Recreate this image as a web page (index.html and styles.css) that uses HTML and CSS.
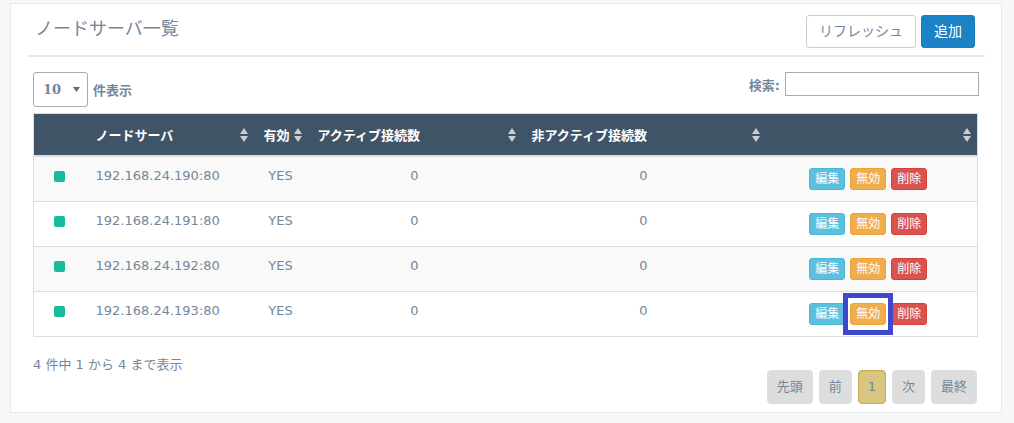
FILE: index.html
```html
<!DOCTYPE html>
<html lang="ja">
<head>
<meta charset="utf-8">
<title>ノードサーバ一覧</title>
<link rel="stylesheet" href="styles.css">
</head>
<body>
<div class="panel">
  <div class="x-title">
    <h2>ノードサーバ一覧</h2>
    <div class="actions">
      <button class="btn btn-default">リフレッシュ</button>
      <button class="btn btn-primary">追加</button>
    </div>
  </div>
  <div class="x-content">
    <div class="controls">
      <div class="length">
        <span class="select"><span class="select-val">10</span><svg class="caret" width="7" height="5" viewBox="0 0 7 5"><path d="M0 0H7L3.5 5Z" fill="#5a6b7c"/></svg></span>
        <span>件表示</span>
      </div>
      <div class="search">
        <span>検索:</span>
        <input type="text" class="search-input">
      </div>
    </div>
    <table class="grid">
      <colgroup>
        <col class="c1"><col class="c2"><col class="c3"><col class="c4"><col class="c5"><col class="c6">
      </colgroup>
      <thead>
        <tr>
          <th></th>
          <th><div class="th"><span>ノードサーバ</span><svg class="sort" width="8" height="14" viewBox="0 0 8 14"><path d="M4 0L8 6H0Z M0 8H8L4 14Z"/></svg></div></th>
          <th><div class="th"><span>有効</span><svg class="sort" width="8" height="14" viewBox="0 0 8 14"><path d="M4 0L8 6H0Z M0 8H8L4 14Z"/></svg></div></th>
          <th><div class="th"><span>アクティブ接続数</span><svg class="sort" width="8" height="14" viewBox="0 0 8 14"><path d="M4 0L8 6H0Z M0 8H8L4 14Z"/></svg></div></th>
          <th><div class="th"><span>非アクティブ接続数</span><svg class="sort" width="8" height="14" viewBox="0 0 8 14"><path d="M4 0L8 6H0Z M0 8H8L4 14Z"/></svg></div></th>
          <th><div class="th"><span></span><svg class="sort" width="8" height="14" viewBox="0 0 8 14"><path d="M4 0L8 6H0Z M0 8H8L4 14Z"/></svg></div></th>
        </tr>
      </thead>
      <tbody>
        <tr>
          <td><span class="dot"></span></td>
          <td class="addr">192.168.24.190:80</td>
          <td>YES</td>
          <td>0</td>
          <td>0</td>
          <td class="act-cell"><div class="acts"><span class="bx bx-info">編集</span><span class="bx bx-warn">無効</span><span class="bx bx-danger">削除</span></div></td>
        </tr>
        <tr>
          <td><span class="dot"></span></td>
          <td class="addr">192.168.24.191:80</td>
          <td>YES</td>
          <td>0</td>
          <td>0</td>
          <td class="act-cell"><div class="acts"><span class="bx bx-info">編集</span><span class="bx bx-warn">無効</span><span class="bx bx-danger">削除</span></div></td>
        </tr>
        <tr>
          <td><span class="dot"></span></td>
          <td class="addr">192.168.24.192:80</td>
          <td>YES</td>
          <td>0</td>
          <td>0</td>
          <td class="act-cell"><div class="acts"><span class="bx bx-info">編集</span><span class="bx bx-warn">無効</span><span class="bx bx-danger">削除</span></div></td>
        </tr>
        <tr>
          <td><span class="dot"></span></td>
          <td class="addr">192.168.24.193:80</td>
          <td>YES</td>
          <td>0</td>
          <td>0</td>
          <td class="act-cell"><div class="acts"><span class="bx bx-info">編集</span><span class="bx bx-warn marked">無効<span class="highlight"></span></span><span class="bx bx-danger">削除</span></div></td>
        </tr>
      </tbody>
    </table>
    <div class="footer">
      <div class="info">4 件中 1 から 4 まで表示</div>
      <div class="pager">
        <span class="pg">先頭</span>
        <span class="pg">前</span>
        <span class="pg pg-active">1</span>
        <span class="pg">次</span>
        <span class="pg">最終</span>
      </div>
    </div>
  </div>
</div>
</body>
</html>
```

FILE: styles.css
```css
html, body {
  margin: 0;
  padding: 0;
}
body {
  background: #F7F7F7;
  font-family: "DejaVu Sans", "Noto Sans CJK JP", sans-serif;
  font-size: 13px;
  color: #73879C;
}
.panel {
  box-sizing: border-box;
  width: 992px;
  height: 410px;
  margin: 3px 0 0 10px;
  background: #fff;
  border: 1px solid #E6E9ED;
  padding: 0 16px 0 17px;
}
.x-title {
  display: flex;
  justify-content: space-between;
  align-items: flex-start;
  padding: 11px 10px 7px 7px;
  border-bottom: 2px solid #E6E9ED;
}
.x-title h2 {
  margin: 3px 0 0 0;
  font-size: 18px;
  font-weight: normal;
  line-height: 22px;
  color: #73879C;
}
.actions {
  display: flex;
  gap: 5px;
}
.btn {
  font-family: "DejaVu Sans", "Noto Sans CJK JP", sans-serif;
  font-size: 14px;
  line-height: 19px;
  padding: 6px 12px;
  border: 1px solid;
  border-radius: 3px;
  margin: 0;
}
.btn-default {
  background: #fff;
  border-color: #ccc;
  color: #73879C;
}
.btn-primary {
  background: #1b82c5;
  border-color: #1a7cbd;
  color: #fff;
}
.x-content {
  padding: 15px 6px 0 5px;
}
.controls {
  display: flex;
  justify-content: space-between;
  align-items: flex-start;
  height: 35px;
  margin-bottom: 6px;
}
.length {
  display: flex;
  align-items: center;
  gap: 5px;
  font-weight: bold;
}
.select {
  box-sizing: border-box;
  width: 55px;
  height: 35px;
  border: 1px solid #aaa;
  border-radius: 3px;
  display: flex;
  align-items: center;
  justify-content: space-between;
  padding: 0 7px 0 9px;
}
.select-val {
  font-family: "DejaVu Serif", serif;
  font-weight: bold;
  font-size: 13px;
  color: #73879C;
}
.search {
  display: flex;
  align-items: center;
  gap: 5px;
  font-weight: bold;
  height: 24px;
}
.search-input {
  box-sizing: border-box;
  width: 194px;
  height: 24px;
  border: 1px solid #aaa;
  margin: 0;
  padding: 0 4px;
}
.grid {
  width: 944px;
  table-layout: fixed;
  border-collapse: collapse;
  border: 1px solid #ddd;
}
.c1 { width: 52px; }
.c2 { width: 168px; }
.c3 { width: 54px; }
.c4 { width: 214px; }
.c5 { width: 244px; }
.c6 { width: 212px; }
.grid th {
  background: #405467;
  color: #fff;
  font-weight: bold;
  height: 41px;
  padding: 0 6px 0 10px;
  text-align: left;
  border-bottom: 2px solid #ddd;
  white-space: nowrap;
}
.th {
  display: flex;
  justify-content: space-between;
  align-items: center;
}
.sort {
  display: block;
  fill: #c9ced4;
}
.grid td {
  padding: 10px 8px 16px;
  line-height: 18px;
  vertical-align: top;
  text-align: center;
  border-top: 1px solid #ddd;
  color: #73879C;
}
.grid td.act-cell {
  padding: 11px 8px 11px;
}
.grid tbody tr:nth-child(odd) td {
  background: #f9f9f9;
}
.grid td.addr {
  text-align: left;
  padding-left: 10px;
}
.dot {
  display: inline-block;
  width: 11px;
  height: 11px;
  border-radius: 2px;
  background: #1ABB9C;
  vertical-align: top;
  margin-top: 4px;
}
.acts {
  display: flex;
  justify-content: center;
  gap: 5px;
  padding-right: 6px;
}
.bx {
  display: inline-block;
  font-size: 12px;
  line-height: 18px;
  padding: 1px 5px;
  border: 1px solid;
  border-radius: 3px;
  color: #fff;
}
.bx-info {
  background: #5BC0DE;
  border-color: #46b8da;
}
.bx-warn {
  background: #F0AD4E;
  border-color: #eea236;
}
.bx-danger {
  background: #D9534F;
  border-color: #d43f3a;
}
.marked {
  position: relative;
}
.highlight {
  position: absolute;
  top: -11px;
  bottom: -11px;
  left: -8px;
  right: -8px;
  border: 5px solid #3F48CC;
}
.footer {
  display: flex;
  justify-content: space-between;
  align-items: flex-start;
}
.info {
  margin-top: 19px;
  line-height: 18px;
}
.pager {
  margin-top: 33px;
  margin-right: 2px;
  display: flex;
  gap: 6px;
}
.pg {
  box-sizing: border-box;
  height: 34px;
  line-height: 32px;
  padding: 0 9px;
  border: 1px solid #dddddd;
  border-radius: 4px;
  background: #dddddd;
  color: #73879C;
}
.pg-active {
  background: #d8c580;
  border-color: #c6a955;
}
```
